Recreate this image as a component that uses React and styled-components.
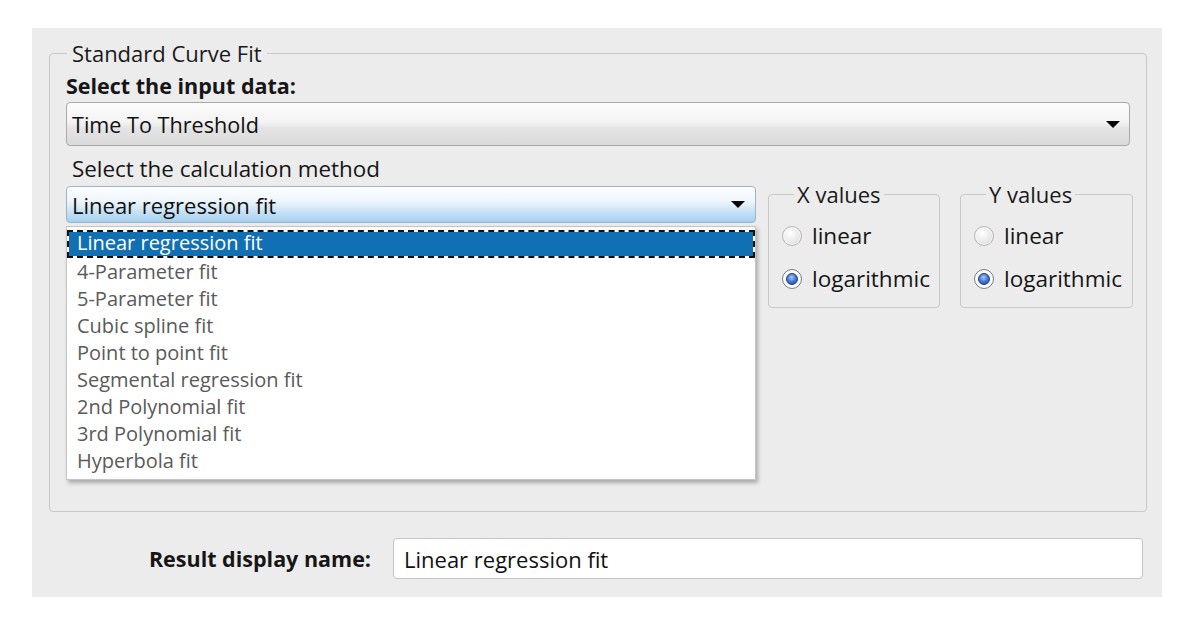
import React from "react";
import styled, { createGlobalStyle } from "styled-components";

const Global = createGlobalStyle`
  html, body { margin: 0; padding: 0; background: #ffffff; }
  body { font-family: "Open Sans", Lato, sans-serif; color: #111; }
`;

const Panel = styled.div`
  margin: 28px 0 0 32px;
  width: 1130px;
  height: 569px;
  box-sizing: border-box;
  background: #ececec;
  padding: 13px 15px 0 17px;
  display: flex;
  flex-direction: column;
`;

const Group = styled.fieldset`
  margin: 0;
  padding: 0 16px 0 16px;
  border: 1px solid #c9c9c9;
  border-radius: 4px;
  min-width: 0;
`;

const Legend = styled.legend`
  font-size: 22px;
  line-height: 24px;
  padding: 0 5px;
  margin-left: 1px;
  color: #1a1a1a;
`;

const Label = styled.div`
  font-size: ${(p) => (p.$bold ? 21.5 : 22.4)}px;
  line-height: 24px;
  font-weight: ${(p) => (p.$bold ? 700 : 400)};
  margin-top: ${(p) => p.$mt || 0}px;
  padding-left: ${(p) => p.$pl || 0}px;
  color: #161616;
`;

const Combo = styled.div`
  position: relative;
  box-sizing: border-box;
  height: ${(p) => p.$h}px;
  margin-top: ${(p) => p.$mt || 0}px;
  border: 1px solid ${(p) => (p.$active ? "#9fb3c4" : "#a9a9a9")};
  border-radius: 4px;
  background: ${(p) =>
    p.$active
      ? "linear-gradient(#fdfeff 0%, #eef6fc 40%, #cfe5f6 65%, #a4cfef 100%)"
      : "linear-gradient(#fbfbfb 0%, #f4f4f4 45%, #e4e4e4 60%, #dadada 100%)"};
  display: flex;
  align-items: center;
  padding: 0 8px 0 5px;
  font-size: ${(p) => p.$fs}px;
  color: #111;
`;

const ComboText = styled.span`
  flex: 1;
`;

const Arrow = styled.span`
  width: 0;
  height: 0;
  border-left: 7px solid transparent;
  border-right: 7px solid transparent;
  border-top: 7px solid #000;
  margin-right: ${(p) => p.$mr || 0}px;
`;

const Row = styled.div`
  display: flex;
  align-items: flex-start;
  margin-top: 5px;
`;

const MethodCol = styled.div`
  position: relative;
  width: 690px;
  flex: none;
`;

const List = styled.ul`
  position: absolute;
  left: 0;
  top: 40px;
  width: 690px;
  height: 254px;
  box-sizing: border-box;
  margin: 0;
  padding: 3px 0 0;
  list-style: none;
  background: #fff;
  border: 1px solid #c4c4c4;
  box-shadow: 2px 3px 4px rgba(0, 0, 0, 0.28);
  z-index: 2;
`;

const Item = styled.li`
  box-sizing: border-box;
  height: ${(p) => (p.$selected ? 28 : 27)}px;
  line-height: ${(p) => (p.$selected ? 22 : 25)}px;
  font-size: 20px;
  padding-left: ${(p) => (p.$selected ? 8 : 10)}px;
  margin-bottom: ${(p) => (p.$selected ? 1 : 0)}px;
  color: ${(p) => (p.$selected ? "#fff" : "#5a5a5a")};
  background: ${(p) => (p.$selected ? "#1170b4" : "transparent")};
  background-clip: padding-box;
  border: ${(p) => (p.$selected ? "2px dashed #111" : "none")};
`;

const ValueBox = styled.fieldset`
  flex: none;
  margin: -4px 0 0 ${(p) => p.$ml}px;
  width: ${(p) => p.$w}px;
  box-sizing: border-box;
  padding: 0 0 7px 13px;
  border: 1px solid #c9c9c9;
  border-radius: 4px;
  min-width: 0;
`;

const SmallLegend = styled.legend`
  font-size: 22px;
  line-height: 24px;
  padding: 0 3px;
  margin-left: 12px;
  color: #1a1a1a;
`;

const RadioRow = styled.div`
  display: flex;
  align-items: center;
  height: 43px;
  gap: 10px;
  font-size: 22.5px;
  color: #161616;
  margin-top: ${(p) => p.$mt || 0}px;
`;

const Radio = styled.span`
  width: 20px;
  height: 20px;
  box-sizing: border-box;
  border-radius: 50%;
  border: 1px solid ${(p) => (p.$checked ? "#7d7d7d" : "#b4b4b4")};
  background: ${(p) =>
    p.$checked
      ? "radial-gradient(circle at 50% 50%, #ffffff 0 60%, #e6e6e6 100%)"
      : "radial-gradient(circle at 40% 35%, #ffffff 0%, #e9e9e9 55%, #cbcbcb 100%)"};
  box-shadow: inset 0 0 0 1px rgba(255, 255, 255, 0.8);
  display: flex;
  align-items: center;
  justify-content: center;
  flex: none;
`;

const Dot = styled.span`
  width: 12px;
  height: 12px;
  border-radius: 50%;
  background: radial-gradient(circle at 45% 35%, #a9c8f2 0%, #4a7fd6 45%, #1b3f97 100%);
  border: 1px solid #1f3b7a;
  box-sizing: border-box;
`;

const Spacer = styled.div`
  height: 203px;
`;

const ResultRow = styled.div`
  display: grid;
  grid-template-columns: 322px 750px;
  column-gap: 22px;
  align-items: center;
  margin-top: 26px;
`;

const ResultLabel = styled.div`
  text-align: right;
  font-size: 21.5px;
  font-weight: 700;
  color: #161616;
`;

const TextInput = styled.div`
  box-sizing: border-box;
  height: 41px;
  background: #fff;
  border: 1px solid #c4c4c4;
  border-radius: 4px;
  font-size: 22px;
  display: flex;
  align-items: center;
  padding: 1px 0 0 10px;
  color: #111;
`;

const methods = [
  "Linear regression fit",
  "4-Parameter fit",
  "5-Parameter fit",
  "Cubic spline fit",
  "Point to point fit",
  "Segmental regression fit",
  "2nd Polynomial fit",
  "3rd Polynomial fit",
  "Hyperbola fit",
];

function Values({ title, ml, w }) {
  return (
    <ValueBox $ml={ml} $w={w}>
      <SmallLegend>{title}</SmallLegend>
      <RadioRow $mt={8}>
        <Radio />
        linear
      </RadioRow>
      <RadioRow>
        <Radio $checked>
          <Dot />
        </Radio>
        logarithmic
      </RadioRow>
    </ValueBox>
  );
}

export default function App() {
  return (
    <>
      <Global />
      <Panel>
        <Group>
          <Legend>Standard Curve Fit</Legend>
          <Label $bold $mt={9}>Select the input data:</Label>
          <Combo $h={44} $mt={4} $fs={21.6}>
            <ComboText>Time To Threshold</ComboText>
            <Arrow $mr={1} />
          </Combo>
          <Label $mt={11} $pl={6}>Select the calculation method</Label>
          <Row>
            <MethodCol>
              <Combo $h={37} $active $fs={22}>
                <ComboText>Linear regression fit</ComboText>
                <Arrow $mr={2} />
              </Combo>
              <List>
                {methods.map((m, i) => (
                  <Item key={m} $selected={i === 0}>{m}</Item>
                ))}
              </List>
            </MethodCol>
            <Values title="X values" ml={12} w={172} />
            <Values title="Y values" ml={20} w={173} />
          </Row>
          <Spacer />
        </Group>
        <ResultRow>
          <ResultLabel>Result display name:</ResultLabel>
          <TextInput>Linear regression fit</TextInput>
        </ResultRow>
      </Panel>
    </>
  );
}
